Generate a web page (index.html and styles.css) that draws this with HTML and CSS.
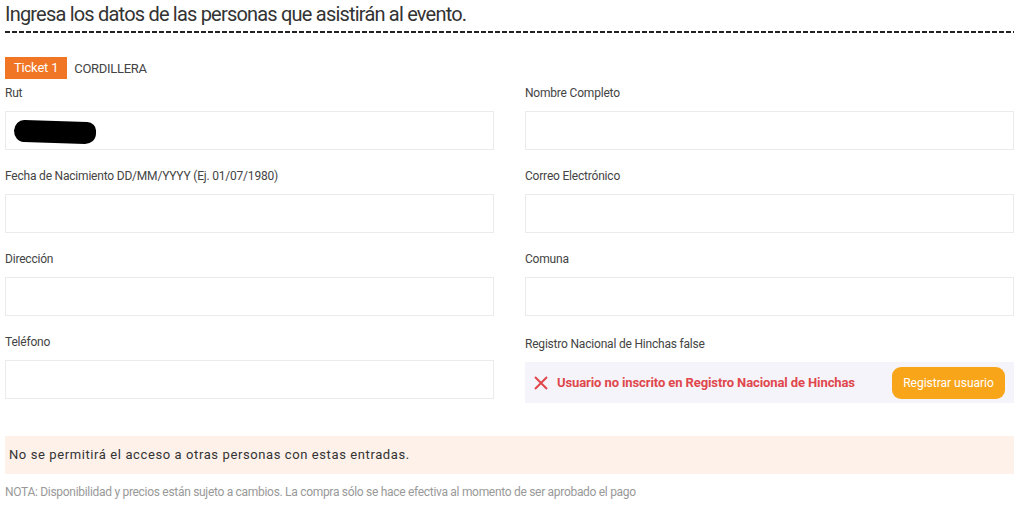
FILE: index.html
```html
<!DOCTYPE html>
<html lang="es">
<head>
<meta charset="utf-8">
<link rel="stylesheet" href="styles.css">
</head>
<body>
<div class="page">
  <h1 class="title">Ingresa los datos de las personas que asistirán al evento.</h1>
  <div class="dashes"></div>

  <div class="ticket-head">
    <span class="badge">Ticket 1</span>
    <span class="sector">CORDILLERA</span>
  </div>

  <div class="grid">
    <div class="field">
      <label class="label">Rut</label>
      <div class="input"><span class="blob"></span></div>
    </div>
    <div class="field">
      <label class="label">Nombre Completo</label>
      <div class="input"></div>
    </div>
    <div class="field">
      <label class="label">Fecha de Nacimiento DD/MM/YYYY (Ej. 01/07/1980)</label>
      <div class="input"></div>
    </div>
    <div class="field">
      <label class="label">Correo Electrónico</label>
      <div class="input"></div>
    </div>
    <div class="field">
      <label class="label">Dirección</label>
      <div class="input"></div>
    </div>
    <div class="field">
      <label class="label">Comuna</label>
      <div class="input"></div>
    </div>
    <div class="field">
      <label class="label">Teléfono</label>
      <div class="input"></div>
    </div>
    <div class="field field-rnh">
      <label class="label">Registro Nacional de Hinchas false</label>
      <div class="rnh">
        <svg class="x-icon" width="16" height="16" viewBox="0 0 16 16"><path d="M2 2 L14 14 M14 2 L2 14" stroke="#e0474c" stroke-width="2" fill="none"/></svg>
        <span class="rnh-text">Usuario no inscrito en Registro Nacional de Hinchas</span>
        <button class="btn">Registrar usuario</button>
      </div>
    </div>
  </div>

  <div class="notice">No se permitirá el acceso a otras personas con estas entradas.</div>
  <p class="nota">NOTA: Disponibilidad y precios están sujeto a cambios. La compra sólo se hace efectiva al momento de ser aprobado el pago</p>
</div>
</body>
</html>
```

FILE: styles.css
```css
* { box-sizing: border-box; }
html, body { margin: 0; padding: 0; background: #fff; }
body { font-family: Roboto, "Liberation Sans", sans-serif; color: #444; }
.page { padding: 0 10px 0 5px; width: 1024px; }
.title {
  margin: 0;
  padding-top: 2px;
  font-size: 20px;
  font-weight: 400;
  color: #333;
  line-height: 24px;
  letter-spacing: -0.8px;
}
.dashes {
  margin-top: 5px;
  height: 2px;
  background: repeating-linear-gradient(90deg, #222 0 5px, transparent 5px 7px);
}
.ticket-head {
  display: flex;
  align-items: center;
  margin-top: 24px;
  height: 22px;
}
.badge {
  background: #f07524;
  color: #fff;
  font-size: 13px;
  height: 22px;
  line-height: 22px;
  padding: 0 9px;
  white-space: nowrap;
  letter-spacing: -0.2px;
}
.sector { margin-left: 7px; font-size: 13px; color: #444; letter-spacing: -0.3px; }
.grid {
  display: grid;
  grid-template-columns: 489px 489px;
  column-gap: 31px;
  row-gap: 0;
  margin-top: 6px;
}
.field { height: 83px; }
.label {
  display: block;
  font-size: 12px;
  line-height: 16px;
  color: #444;
  height: 26px;
  letter-spacing: -0.2px;
}
.input {
  height: 39px;
  border: 1px solid #ebebeb;
  background: #fff;
  position: relative;
}
.blob {
  position: absolute;
  left: 8px; top: 9px;
  width: 82px; height: 22px;
  background: #000;
  border-radius: 11px 10px 12px 11px / 12px 9px 11px 12px;
  transform: rotate(2deg);
}
.field-rnh .label { padding-top: 2px; height: 28px; }
.rnh {
  height: 41px;
  background: #f5f4fa;
  display: flex;
  align-items: center;
  padding: 0 9px 0 8px;
}
.x-icon { flex: none; }
.rnh-text {
  margin-left: 8px;
  color: #e0474c;
  font-weight: 700;
  font-size: 13px;
  letter-spacing: -0.1px;
  flex: 1;
}
.btn {
  border: none;
  background: #f9a51a;
  color: #fff;
  font-family: inherit;
  font-size: 12px;
  border-radius: 9px;
  height: 32px;
  width: 113px;
  padding: 0;
}
.notice {
  margin-top: 19px;
  background: #fdf1ea;
  height: 38px;
  line-height: 38px;
  padding-left: 4px;
  font-size: 13px;
  letter-spacing: 0.6px;
  color: #333;
}
.nota {
  margin: 11px 0 0;
  font-size: 12px;
  color: #999;
  letter-spacing: -0.3px;
}
```
